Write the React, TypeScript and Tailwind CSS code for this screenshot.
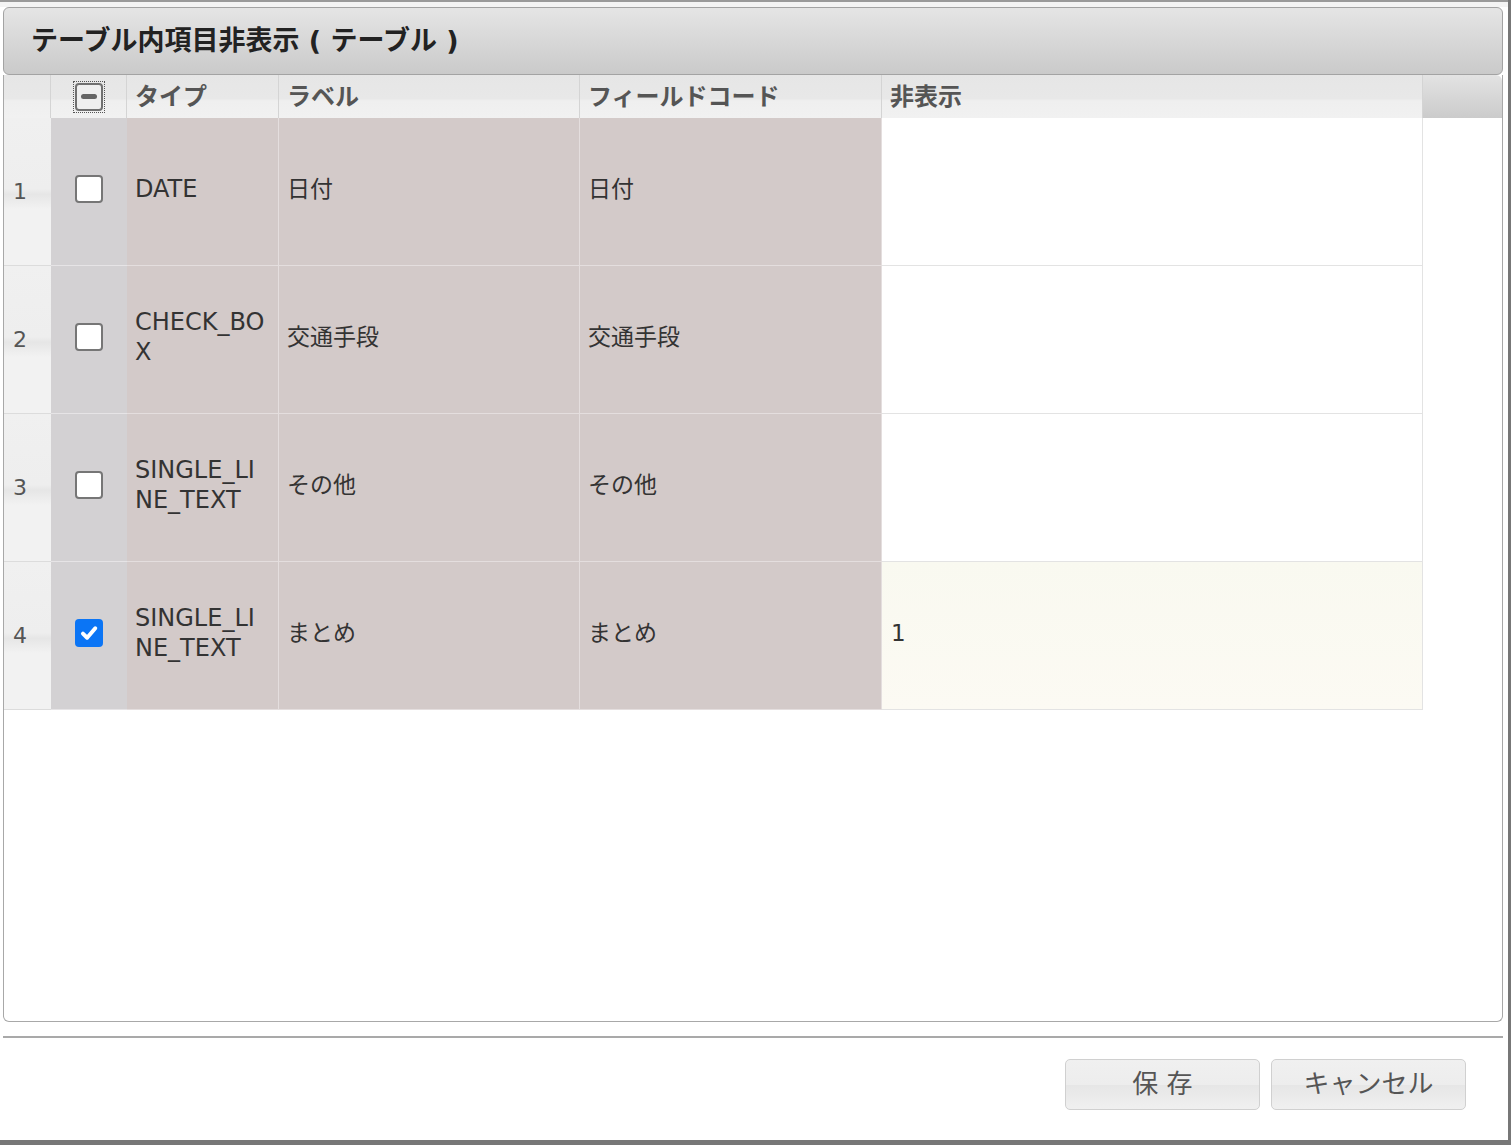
import { Fragment } from "react";

const FONT = { fontFamily: '"DejaVu Sans", "Noto Sans CJK JP", sans-serif' };

type Row = {
  no: number;
  checked: boolean;
  type: string[];
  label: string;
  code: string;
  hidden: string;
};

const ROWS: Row[] = [
  { no: 1, checked: false, type: ["DATE"], label: "日付", code: "日付", hidden: "" },
  { no: 2, checked: false, type: ["CHECK_BO", "X"], label: "交通手段", code: "交通手段", hidden: "" },
  { no: 3, checked: false, type: ["SINGLE_LI", "NE_TEXT"], label: "その他", code: "その他", hidden: "" },
  { no: 4, checked: true, type: ["SINGLE_LI", "NE_TEXT"], label: "まとめ", code: "まとめ", hidden: "1" },
];

function Check({ checked }: { checked: boolean }) {
  if (checked) {
    return (
      <span className="flex h-[28px] w-[28px] items-center justify-center rounded-[4px] bg-[#0b75f5]">
        <svg viewBox="0 0 20 20" className="h-[22px] w-[22px]">
          <path d="M4.5 10.5l3.8 3.8 7.4-8.6" fill="none" stroke="#fff" strokeWidth="3.6" strokeLinecap="round" strokeLinejoin="round" />
        </svg>
      </span>
    );
  }
  return <span className="block h-[28px] w-[28px] rounded-[4px] border-2 border-[#767676] bg-white" />;
}

export default function App() {
  return (
    <div className="flex h-[1145px] w-[1511px] flex-col border-r-[3px] border-b-[5px] border-[#777] bg-white text-[#333]" style={FONT}>
      {/* background strip above dialog */}
      <div className="h-[7px] shrink-0 border-t-2 border-[#9a9a9a] bg-[#f4f4f4]" />

      {/* title bar */}
      <div className="ml-[3px] mr-[5px] flex h-[68px] shrink-0 items-center rounded-[6px] border border-[#a3a3a3] bg-[linear-gradient(#e5e5e5,#cacaca)] pl-[27px]">
        <span className="text-[27px] font-bold text-[#222]">テーブル内項目非表示 ( テーブル )</span>
      </div>

      {/* grid */}
      <div className="ml-[3px] mr-[5px] flex h-[947px] shrink-0 flex-col overflow-hidden rounded-b-[6px] border-x border-b border-[#a8a8a8]">
        <div className="flex h-[43px] shrink-0 text-[24px] font-semibold text-[#555]">
          <div className="w-[47px] border-r border-[#d4d4d4] bg-[linear-gradient(#e6e6e6_0%,#e8e8e8_55%,#efefef_60%,#f1f1f1_100%)]" />
          <div className="flex w-[76px] items-center justify-center border-r border-[#d4d4d4] bg-[linear-gradient(#e6e6e6_0%,#e8e8e8_55%,#efefef_60%,#f1f1f1_100%)]">
            <span className="flex h-[32px] w-[32px] items-center justify-center border border-dotted border-[#555]">
              <span className="flex h-[28px] w-[28px] items-center justify-center rounded-[4px] border-2 border-[#707070] bg-[#efefef]">
                <span className="h-[5px] w-[16px] rounded-full bg-[#666]" />
              </span>
            </span>
          </div>
          {[
            ["タイプ", "w-[152px]"],
            ["ラベル", "w-[301px]"],
            ["フィールドコード", "w-[302px]"],
            ["非表示", "w-[541px]"],
          ].map(([t, w]) => (
            <div key={t} className={`${w} flex items-center border-r border-[#d4d4d4] bg-[linear-gradient(#e6e6e6_0%,#e8e8e8_55%,#efefef_60%,#f1f1f1_100%)] pl-[8px]`}>
              {t}
            </div>
          ))}
          <div className="flex-1 rounded-tr-[6px] bg-[linear-gradient(#e3e3e3,#cbcbcb)]" />
        </div>

        {ROWS.map((r) => (
          <div key={r.no} className="flex h-[148px] shrink-0 text-[23px] leading-[30px]">
            <div className="flex w-[47px] items-center border-b border-[#dcdcdc] bg-[linear-gradient(#f0f0f0_0%,#eeeeee_48%,#e6e6e6_52%,#f2f2f2_62%,#f2f2f2_100%)] pl-[9px] text-[22px] text-[#555]">
              {r.no}
            </div>
            <div className="flex w-[76px] items-center justify-center border-b border-[#e6e4e6] bg-[#d3d1d3] pb-[6px]">
              <Check checked={r.checked} />
            </div>
            <div className="flex w-[152px] flex-col justify-center border-r border-b border-[#e4dede] bg-[#d3cac9] pb-[6px] pl-[8px] text-[24px]">
              {r.type.map((t, i) => (
                <Fragment key={i}>
                  <span>{t}</span>
                </Fragment>
              ))}
            </div>
            <div className="flex w-[301px] items-center border-r border-b border-[#e4dede] bg-[#d3cac9] pb-[6px] pl-[8px]">
              {r.label}
            </div>
            <div className="flex w-[302px] items-center border-r border-b border-[#e4dede] bg-[#d3cac9] pb-[6px] pl-[8px]">
              {r.code}
            </div>
            <div
              className={`flex w-[541px] items-center border-r border-b border-[#e3e3e3] pb-[6px] pl-[9px] ${
                r.hidden ? "bg-[linear-gradient(#f9f9f0,#fcfaf3)]" : "bg-white"
              }`}
            >
              {r.hidden}
            </div>
          </div>
        ))}
        <div className="flex-1" />
      </div>

      {/* footer */}
      <div className="ml-[3px] mr-[5px] mt-[14px] h-0 shrink-0 border-t-2 border-[#a9a9a9]" />
      <div className="mr-[42px] mt-[21px] flex justify-end gap-[11px]">
        {["保 存", "キャンセル"].map((b) => (
          <button
            key={b}
            className="flex h-[51px] w-[195px] items-center justify-center rounded-[5px] border border-[#d0d0d0] bg-[linear-gradient(#f0f0f0_0%,#ededed_50%,#e6e6e6_52%,#f0f0f0_100%)] text-[26px] text-[#555]"
          >
            {b}
          </button>
        ))}
      </div>
    </div>
  );
}
